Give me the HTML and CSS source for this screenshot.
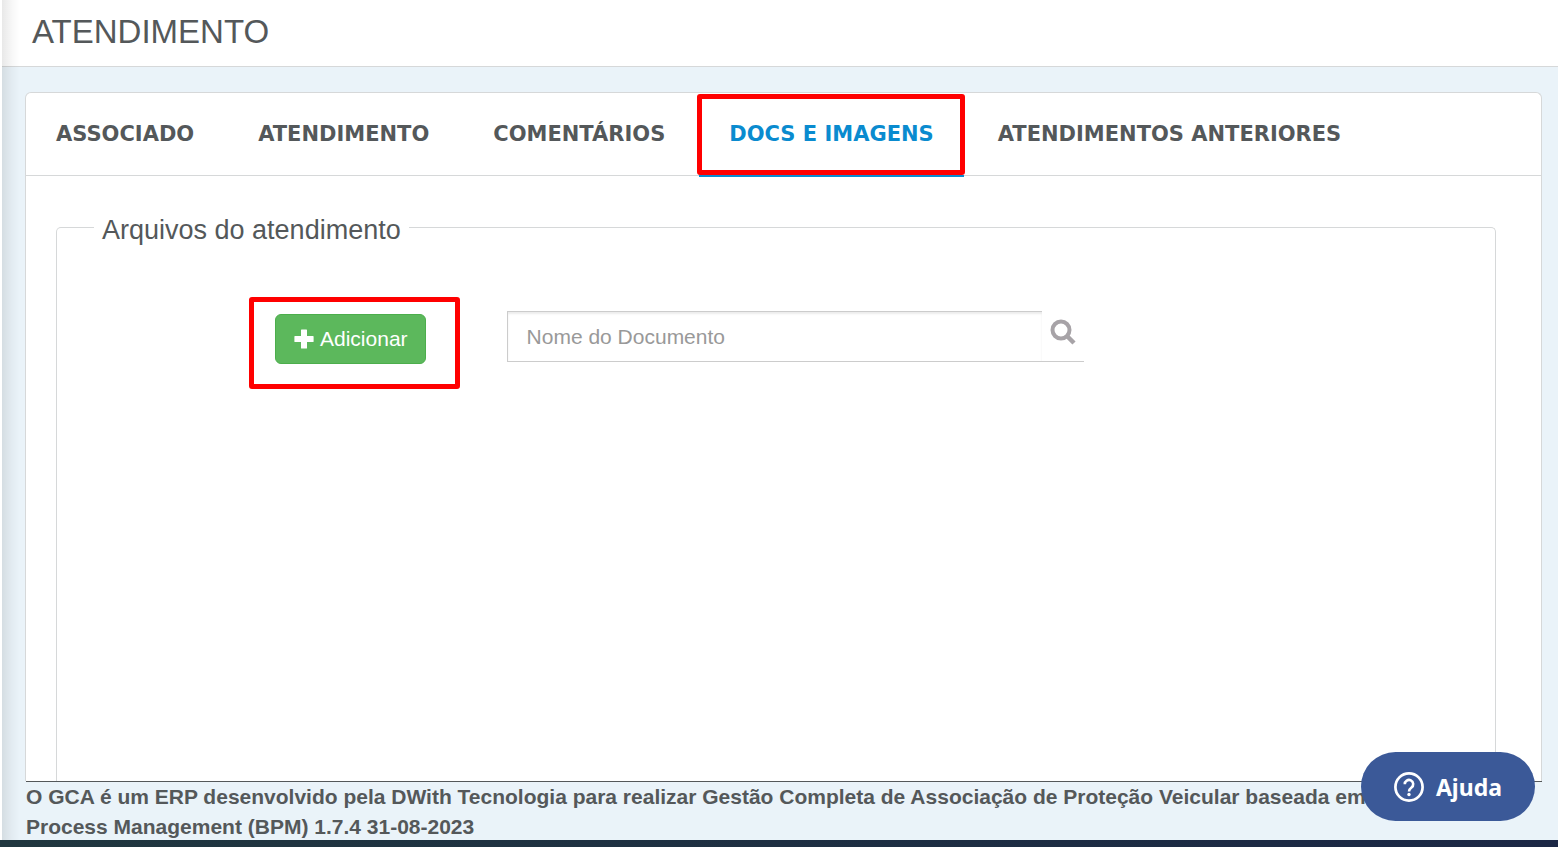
FILE: index.html
```html
<!DOCTYPE html>
<html lang="pt-BR">
<head>
    <meta charset="UTF-8">
    <meta name="viewport" content="width=device-width, initial-scale=1.0">
    <title>Atendimento</title>
    <link rel="stylesheet" href="styles.css">
</head>
<body>

    <div class="page">
        <header class="page-header">
            <h1>ATENDIMENTO</h1>
        </header>

        <main class="content">
            <section class="card">
                <nav class="tabs">
                    <a href="#associado">ASSOCIADO</a>
                    <a href="#atendimento">ATENDIMENTO</a>
                    <a href="#comentarios">COMENTÁRIOS</a>
                    <a href="#docs" class="active">DOCS E IMAGENS<span class="mark mark-tab"></span></a>
                    <a href="#anteriores">ATENDIMENTOS ANTERIORES</a>
                </nav>

                <fieldset class="files">
                    <legend>Arquivos do atendimento</legend>
                    <div class="toolbar">
                        <div class="add">
                            <button type="button" class="btn-add">
                                <svg width="20" height="20" viewBox="0 0 20 20" aria-hidden="true">
                                    <path d="M7 1q0-.6.6-.6h4.800q.6 0 .6.6v6h6q.6 0 .6.600v4.800q0 .6-.6.600h-6v6q0 .6-.6.600h-4.800q-.6 0-.6-.6v-6h-6q-.6 0-.6-.6v-4.800q0-.6.6-.6h6z" fill="#fff"/>
                                </svg>
                                Adicionar
                            </button>
                            <span class="mark mark-add"></span>
                        </div>
                        <div class="search">
                            <input type="text" placeholder="Nome do Documento" aria-label="Nome do Documento">
                            <button type="button" class="btn-search" aria-label="Pesquisar">
                                <svg width="26" height="26" viewBox="0 0 26 26" fill="none" stroke="#a7a3a7" aria-hidden="true">
                                    <circle cx="11" cy="11" r="8.500" stroke-width="4"/>
                                    <path d="M17 17l7 7" stroke-width="4.500"/>
                                </svg>
                            </button>
                        </div>
                    </div>
                </fieldset>
            </section>
        </main>

        <footer class="page-footer">
            <p>O GCA é um ERP desenvolvido pela DWith Tecnologia para realizar Gestão Completa de Associação de Proteção Veicular baseada em Process Management (BPM) 1.7.4 31-08-2023</p>
        </footer>
    </div>

    <div class="bottom-bar"></div>

    <button type="button" class="help">
        <svg width="30" height="30" viewBox="0 0 30 30" fill="none" stroke="#fff" aria-hidden="true">
            <circle cx="15" cy="15" r="13.600" stroke-width="2.700"/>
            <path d="M10.800 12.200a4.200 4.200 0 1 1 6.700 3.300c-1.600 1.200-2.500 1.900-2.500 4" stroke-width="2.600"/>
            <circle cx="15" cy="22.500" r="1.700" fill="#fff" stroke="none"/>
        </svg>
        Ajuda
    </button>

</body>
</html>
```

FILE: styles.css
```css
* {
    box-sizing: border-box;
}

body {
    margin: 0;
    height: 100vh;
    display: flex;
    flex-direction: column;
    overflow: hidden;
    font-family: "Liberation Sans", Arial, sans-serif;
    font-size: 21px;
    color: #54585a;
    background-color: #fff;
}

button, input {
    font-family: inherit;
    font-size: inherit;
}

/* Page */
.page {
    flex: 1;
    min-height: 0;
    margin-left: 2px;
    display: flex;
    flex-direction: column;
    position: relative;
    background-color: #eaf3f9;
}

/* shadow of the collapsed side menu */
.page::before {
    content: "";
    position: absolute;
    top: 0;
    bottom: 0;
    left: 0;
    width: 18px;
    background: linear-gradient(to right, rgba(0, 0, 0, 0.09), rgba(0, 0, 0, 0.03) 55%, rgba(0, 0, 0, 0));
}

.page-header {
    padding: 12px 30px 14px;
    background-color: #fff;
    border-bottom: 1px solid #d6d8d9;
}

.page-header h1 {
    margin: 0;
    font-size: 33px;
    font-weight: normal;
    line-height: 40px;
}

.content {
    flex: 1;
    min-height: 0;
    padding: 25px 16px 0 23px;
    display: flex;
}

.card {
    flex: 1;
    display: flex;
    flex-direction: column;
    background-color: #fff;
    border: 1px solid #d6d8d9;
    border-bottom: none;
    border-radius: 6px 6px 0 0;
}

/* Tabs */
.tabs {
    display: flex;
    gap: 4px;
    border-bottom: 1px solid #d6d8d9;
}

.tabs a {
    position: relative;
    padding: 26px 30px;
    margin-bottom: -2px;
    border-bottom: 2px solid transparent;
    font-family: "DejaVu Sans", Verdana, sans-serif;
    font-size: 21px;
    font-weight: bold;
    line-height: 30px;
    color: #54585a;
    text-decoration: none;
    white-space: nowrap;
}

.tabs a.active {
    color: #0a8bcf;
    border-bottom-color: #0a8bcf;
}

/* Red highlight boxes */
.mark {
    position: absolute;
    border: 5px solid #f00;
    border-radius: 3px;
    pointer-events: none;
}

.mark-tab {
    inset: 1px -1px 0 -2px;
}

.mark-add {
    inset: -17px -34px -25px -26px;
}

/* Files */
.files {
    flex: 1;
    margin: 33px 45px 0 30px;
    padding: 66px 0 0 218px;
    border: 1px solid #d6d8d9;
    border-bottom: none;
    border-radius: 5px 5px 0 0;
}

.files legend {
    margin-left: -181px;
    padding: 6px 8px 0;
    font-size: 27px;
    line-height: 30px;
}

.toolbar {
    display: flex;
    align-items: flex-start;
    gap: 81px;
}

.add {
    position: relative;
    margin-top: 3px;
}

.btn-add {
    display: flex;
    align-items: center;
    gap: 6px;
    height: 50px;
    padding: 0 17px 0 18px;
    color: #fff;
    background-color: #5cb85c;
    border: 1px solid #4cae4c;
    border-radius: 6px;
    cursor: pointer;
}

.search {
    flex: 0 1 577px;
    display: flex;
}

.search input {
    flex: 1;
    min-width: 0;
    height: 51px;
    padding: 0 19px;
    color: #54585a;
    border: 1px solid #ccc;
    border-right: none;
    box-shadow: inset 0 2px 2px rgba(0, 0, 0, 0.08);
}

.search input::placeholder {
    color: #999;
}

.btn-search {
    width: 42px;
    padding: 0 0 4px;
    background-color: #fff;
    border: none;
    border-bottom: 1px solid #ccc;
    cursor: pointer;
}

/* Footer */
.page-footer {
    height: 59px;
    margin-left: 24px;
    margin-right: 16px;
    border-top: 1px solid #54585a;
    font-weight: bold;
    line-height: 30px;
}

/* keeps the text clear of the help button */
.page-footer p {
    margin: 0;
    padding-right: 160px;
}

.bottom-bar {
    height: 7px;
    position: relative;
    background: linear-gradient(to right, #20373f, #1b2745);
}

.help {
    position: fixed;
    right: 23px;
    bottom: 26px;
    height: 69px;
    padding: 0 33px;
    display: flex;
    align-items: center;
    gap: 12px;
    font-family: "Noto Sans", sans-serif;
    font-size: 23px;
    font-weight: bold;
    color: #fff;
    background-color: #3b5998;
    border: none;
    border-radius: 35px;
    cursor: pointer;
}
```
